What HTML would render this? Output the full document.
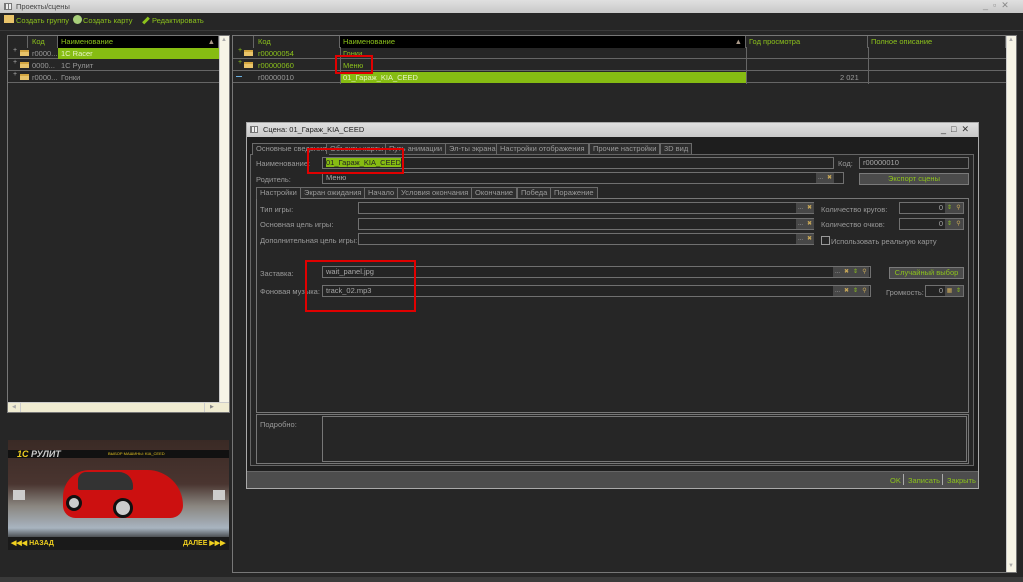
<!DOCTYPE html>
<html><head><meta charset="utf-8"><style>
*{margin:0;padding:0;box-sizing:border-box}
body{width:1023px;height:582px;background:#262626;font-family:"Liberation Sans",sans-serif;font-size:7.5px;color:#9a9a9a;position:relative;overflow:hidden}
.a{position:absolute;white-space:nowrap}
.g{color:#8cc21c}
.tb{background:linear-gradient(#e0e0e0,#c8c8c8);color:#444}
.inp{position:absolute;border:1px solid #707070;background:#242424;height:12px;color:#a8a8a8;padding-left:3px;line-height:10px;white-space:nowrap}
.btn{position:absolute;background:#4b4b4b;border:1px solid #7a7a7a;height:12px;color:#8cc21c;text-align:center;line-height:10px}
.sb{position:absolute;width:9px;height:10px;background:#474747;color:#aaa;font-size:6px;text-align:center;line-height:10px}
.row{position:absolute;height:12px;border-bottom:1px solid #666;line-height:11px}
.hdr{position:absolute;height:12px;line-height:12px;color:#8cc21c;border-right:1px solid #666;white-space:nowrap}
.fold{position:absolute;width:9px;height:6px;background:#e9c46a;border-top:2px solid #d4a640}
.tab{position:absolute;height:11px;border:1px solid #6a6a6a;border-bottom:none;background:#2e2e2e;line-height:10px;padding:0 3px;color:#9a9a9a;white-space:nowrap}
.cream{background:#f6f4e6}
</style></head><body>
<div class="a tb" style="left:0;top:0;width:1023px;height:13px;line-height:13px;padding-left:16px;font-size:7.5px">Проекты/сцены</div>
<div class="a" style="left:4px;top:3px;width:8px;height:7px;border:1px solid #777;background:repeating-linear-gradient(90deg,#777 0 1px,#eee 1px 3px)"></div>
<div class="a" style="left:983px;top:0px;color:#888;font-size:9px">_ &nbsp;▫ &nbsp;✕</div>
<div class="a g" style="left:4px;top:15px;width:10px;height:8px;background:#e9c46a"></div>
<div class="a g" style="left:16px;top:16px">Создать группу</div>
<div class="a" style="left:73px;top:15px;width:9px;height:9px;border-radius:50%;background:#a8cf7a"></div>
<div class="a g" style="left:83px;top:16px">Создать карту</div>
<div class="a" style="left:142px;top:16px;width:8px;height:3px;background:#8cc21c;transform:rotate(-45deg);margin-top:3px"></div>
<div class="a g" style="left:152px;top:16px">Редактировать</div>
<div class="a" style="left:0;top:30px;width:1023px;height:1px;background:#3a3a3a"></div>

<div class="a" style="left:7px;top:35px;width:223px;height:378px;border:1px solid #777;background:#262626"></div>
<div class="hdr" style="left:8px;top:36px;width:20px"></div>
<div class="hdr" style="left:28px;top:36px;width:30px;padding-left:4px">Код</div>
<div class="hdr" style="left:58px;top:36px;width:161px;background:#000;padding-left:3px">Наименование<span style="position:absolute;right:3px;color:#a98">▲</span></div>
<div class="a cream" style="left:219px;top:36px;width:10px;height:366px;border-left:1px solid #ccc"></div>
<div class="a" style="left:221px;top:37px;color:#aaa;font-size:6px">▲</div>
<div class="row" style="left:8px;top:47px;width:211px"></div>
<div class="row" style="left:8px;top:59px;width:211px"></div>
<div class="row" style="left:8px;top:71px;width:211px"></div>
<div class="a" style="left:58px;top:48px;width:161px;height:11px;background:#86bc12"></div>
<div class="a" style="left:61px;top:49px;color:#e8f5c8">1C Racer</div>
<div class="a" style="left:61px;top:61px">1C Рулит</div>
<div class="a" style="left:61px;top:73px">Гонки</div>
<div class="a" style="left:32px;top:49px">r0000...</div>
<div class="a" style="left:32px;top:61px">0000...</div>
<div class="a" style="left:32px;top:73px">r0000...</div>
<div class="a" style="left:13px;top:47px;color:#aaa;font-size:7px">+</div>
<div class="a" style="left:13px;top:59px;color:#aaa;font-size:7px">+</div>
<div class="a" style="left:13px;top:71px;color:#aaa;font-size:7px">+</div>
<div class="fold" style="left:20px;top:50px"></div>
<div class="fold" style="left:20px;top:62px"></div>
<div class="fold" style="left:20px;top:74px"></div>
<div class="a" style="left:8px;top:402px;width:221px;height:10px;background:#f0ecd2;border-top:1px solid #ccc"></div>
<div class="a" style="left:12px;top:404px;color:#aaa;font-size:5px">◀</div>
<div class="a" style="left:210px;top:404px;color:#888;font-size:5px">▶</div>
<div class="a" style="left:204px;top:402px;width:1px;height:10px;background:#ccc"></div>
<div class="a" style="left:20px;top:402px;width:1px;height:10px;background:#ccc"></div>

<div class="a" style="left:8px;top:440px;width:221px;height:110px;background:linear-gradient(#3a2a25 0,#4a3530 40%,#8a8680 60%,#a8b4c0 80%,#222 92%)">
 <div class="a" style="left:0;top:10px;width:221px;height:8px;background:#111"></div>
 <div class="a" style="left:9px;top:9px;color:#f0d020;font-weight:bold;font-size:9px;font-style:italic">1C <span style="color:#ccc">РУЛИТ</span></div>
 <div class="a" style="left:100px;top:11px;color:#e0c020;font-size:4px">ВЫБОР МАШИНЫ: KIA_CEED</div>
 <div class="a" style="left:55px;top:30px;width:120px;height:48px;background:#cc1010;border-radius:30px 40px 14px 14px"></div>
 <div class="a" style="left:70px;top:32px;width:55px;height:18px;background:#333;border-radius:8px 14px 2px 2px"></div>
 <div class="a" style="left:58px;top:55px;width:16px;height:16px;border-radius:50%;background:#ccc;border:3px solid #111"></div>
 <div class="a" style="left:105px;top:58px;width:20px;height:20px;border-radius:50%;background:#ccc;border:3px solid #111"></div>
 <div class="a" style="left:5px;top:50px;width:12px;height:10px;background:#ccc"></div>
 <div class="a" style="left:205px;top:50px;width:12px;height:10px;background:#ccc"></div>
 <div class="a" style="left:0;top:97px;width:221px;height:13px;background:#1a1a1a"></div>
 <div class="a" style="left:3px;top:99px;color:#f0d020;font-size:7px;font-weight:bold">◀◀◀ НАЗАД</div>
 <div class="a" style="left:175px;top:99px;color:#f0d020;font-size:7px;font-weight:bold">ДАЛЕЕ ▶▶▶</div>
</div>

<div class="a" style="left:232px;top:35px;width:785px;height:538px;border:1px solid #777;background:#262626"></div>
<div class="hdr" style="left:233px;top:36px;width:21px"></div>
<div class="hdr" style="left:254px;top:36px;width:86px;padding-left:4px">Код</div>
<div class="hdr" style="left:340px;top:36px;width:406px;background:#000;padding-left:3px">Наименование<span style="position:absolute;right:3px;color:#a98">▲</span></div>
<div class="hdr" style="left:746px;top:36px;width:122px;padding-left:3px">Год просмотра</div>
<div class="hdr" style="left:868px;top:36px;width:138px;padding-left:3px">Полное описание</div>
<div class="a cream" style="left:1006px;top:36px;width:10px;height:536px;border-left:1px solid #ccc"></div>
<div class="a" style="left:1008px;top:37px;color:#aaa;font-size:6px">▲</div>
<div class="a" style="left:1008px;top:563px;color:#aaa;font-size:6px">▼</div>
<div class="row" style="left:233px;top:47px;width:773px"></div>
<div class="row" style="left:233px;top:59px;width:773px"></div>
<div class="row" style="left:233px;top:71px;width:773px"></div>
<div class="a" style="left:340px;top:47px;width:1px;height:37px;background:#666"></div>
<div class="a" style="left:746px;top:47px;width:1px;height:37px;background:#666"></div>
<div class="a" style="left:868px;top:47px;width:1px;height:37px;background:#666"></div>
<div class="a" style="left:341px;top:72px;width:405px;height:11px;background:#86bc12"></div>
<div class="a g" style="left:343px;top:49px">Гонки</div>
<div class="a g" style="left:343px;top:61px">Меню</div>
<div class="a" style="left:343px;top:73px;color:#e8f5c8">01_Гараж_KIA_CEED</div>
<div class="a g" style="left:258px;top:49px">r00000054</div>
<div class="a g" style="left:258px;top:61px">r00000060</div>
<div class="a" style="left:258px;top:73px">r00000010</div>
<div class="a" style="left:840px;top:73px">2 021</div>
<div class="a g" style="left:238px;top:47px;font-size:7px">+</div>
<div class="a g" style="left:238px;top:59px;font-size:7px">+</div>
<div class="a" style="left:236px;top:76px;width:6px;height:1px;background:#6ab0e0"></div>
<div class="fold" style="left:244px;top:50px"></div>
<div class="fold" style="left:244px;top:62px"></div>

<div class="a" style="left:246px;top:122px;width:733px;height:367px;background:#1e1e1e;border:1px solid #aaa"></div>
<div class="a tb" style="left:247px;top:123px;width:731px;height:14px;line-height:14px;padding-left:16px;color:#222">Сцена: 01_Гараж_KIA_CEED</div>
<div class="a" style="left:250px;top:126px;width:8px;height:7px;border:1px solid #777;background:repeating-linear-gradient(90deg,#777 0 1px,#eee 1px 3px)"></div>
<div class="a" style="left:941px;top:124px;color:#333;font-size:9px">_ &nbsp;□ &nbsp;✕</div>
<div class="a" style="left:250px;top:154px;width:724px;height:312px;border:1px solid #666;background:#262626"></div>
<div class="tab" style="left:252px;top:143px;background:#262626;height:12px">Основные сведения</div>
<div class="tab" style="left:326px;top:143px">Объекты карты</div>
<div class="tab" style="left:385px;top:143px">Путь анимации</div>
<div class="tab" style="left:445px;top:143px">Эл-ты экрана</div>
<div class="tab" style="left:496px;top:143px">Настройки отображения</div>
<div class="tab" style="left:589px;top:143px">Прочие настройки</div>
<div class="tab" style="left:660px;top:143px">3D вид</div>

<div class="a" style="left:256px;top:159px">Наименование:</div>
<div class="inp" style="left:322px;top:157px;width:512px"><span style="background:#86bc12;color:#222">01_Гараж_KIA_CEED</span></div>
<div class="a" style="left:838px;top:159px">Код:</div>
<div class="inp" style="left:859px;top:157px;width:110px">r00000010</div>
<div class="a" style="left:256px;top:175px">Родитель:</div>
<div class="inp" style="left:322px;top:172px;width:522px">Меню</div>
<div class="sb" style="left:816px;top:173px">...</div><div class="sb" style="left:825px;top:173px;color:#c8a858">✖</div>
<div class="btn" style="left:859px;top:173px;width:110px">Экспорт сцены</div>

<div class="a" style="left:256px;top:198px;width:713px;height:215px;border:1px solid #777"></div>
<div class="tab" style="left:256px;top:187px;background:#262626;height:12px">Настройки</div>
<div class="tab" style="left:300px;top:187px">Экран ожидания</div>
<div class="tab" style="left:364px;top:187px">Начало</div>
<div class="tab" style="left:397px;top:187px">Условия окончания</div>
<div class="tab" style="left:471px;top:187px">Окончание</div>
<div class="tab" style="left:517px;top:187px">Победа</div>
<div class="tab" style="left:550px;top:187px">Поражение</div>

<div class="a" style="left:260px;top:205px">Тип игры:</div>
<div class="inp" style="left:358px;top:202px;width:456px"></div>
<div class="sb" style="left:796px;top:203px">...</div><div class="sb" style="left:805px;top:203px;color:#c8a858">✖</div>
<div class="a" style="left:260px;top:220px">Основная цель игры:</div>
<div class="inp" style="left:358px;top:218px;width:456px"></div>
<div class="sb" style="left:796px;top:219px">...</div><div class="sb" style="left:805px;top:219px;color:#c8a858">✖</div>
<div class="a" style="left:260px;top:236px">Дополнительная цель игры:</div>
<div class="inp" style="left:358px;top:233px;width:456px"></div>
<div class="sb" style="left:796px;top:234px">...</div><div class="sb" style="left:805px;top:234px;color:#c8a858">✖</div>

<div class="a" style="left:821px;top:205px">Количество кругов:</div>
<div class="inp" style="left:899px;top:202px;width:65px;text-align:right;padding-right:20px">0</div>
<div class="sb" style="left:945px;top:203px;color:#8cc21c">⇕</div><div class="sb" style="left:954px;top:203px;color:#c8a858">⚲</div>
<div class="a" style="left:821px;top:220px">Количество очков:</div>
<div class="inp" style="left:899px;top:218px;width:65px;text-align:right;padding-right:20px">0</div>
<div class="sb" style="left:945px;top:219px;color:#8cc21c">⇕</div><div class="sb" style="left:954px;top:219px;color:#c8a858">⚲</div>
<div class="a" style="left:821px;top:236px;width:9px;height:9px;border:1px solid #999"></div>
<div class="a" style="left:831px;top:237px">Использовать реальную карту</div>

<div class="a" style="left:260px;top:269px">Заставка:</div>
<div class="inp" style="left:322px;top:266px;width:549px">wait_panel.jpg</div>
<div class="sb" style="left:833px;top:267px">...</div><div class="sb" style="left:842px;top:267px;color:#c8a858">✖</div><div class="sb" style="left:851px;top:267px;color:#8cc21c">⇕</div><div class="sb" style="left:860px;top:267px;color:#c8a858">⚲</div>
<div class="a" style="left:260px;top:287px">Фоновая музыка:</div>
<div class="inp" style="left:322px;top:285px;width:549px">track_02.mp3</div>
<div class="sb" style="left:833px;top:286px">...</div><div class="sb" style="left:842px;top:286px;color:#c8a858">✖</div><div class="sb" style="left:851px;top:286px;color:#8cc21c">⇕</div><div class="sb" style="left:860px;top:286px;color:#c8a858">⚲</div>
<div class="btn" style="left:889px;top:267px;width:75px">Случайный выбор</div>
<div class="a" style="left:886px;top:288px">Громкость:</div>
<div class="inp" style="left:925px;top:285px;width:39px;text-align:right;padding-right:20px">0</div>
<div class="sb" style="left:945px;top:286px;color:#c8a858">▦</div><div class="sb" style="left:954px;top:286px;color:#8cc21c">⇕</div>

<div class="a" style="left:256px;top:414px;width:713px;height:50px;border:1px solid #777"></div>
<div class="a" style="left:260px;top:420px">Подробно:</div>
<div class="a" style="left:322px;top:416px;width:645px;height:46px;border:1px solid #777"></div>

<div class="a" style="left:247px;top:471px;width:731px;height:17px;background:#4d4d4d;border-top:1px solid #666"></div>
<div class="a g" style="left:890px;top:476px">OK</div>
<div class="a" style="left:903px;top:474px;width:1px;height:11px;background:#aaa"></div>
<div class="a g" style="left:908px;top:476px">Записать</div>
<div class="a" style="left:942px;top:474px;width:1px;height:11px;background:#aaa"></div>
<div class="a g" style="left:947px;top:476px">Закрыть</div>

<div class="a" style="left:335px;top:55px;width:38px;height:19px;border:2px solid #e00000"></div>
<div class="a" style="left:307px;top:148px;width:97px;height:26px;border:2px solid #e00000"></div>
<div class="a" style="left:305px;top:260px;width:111px;height:52px;border:2px solid #e00000"></div>

<div class="a" style="left:0;top:577px;width:1023px;height:5px;background:#3a3a3a"></div>
</body></html>
